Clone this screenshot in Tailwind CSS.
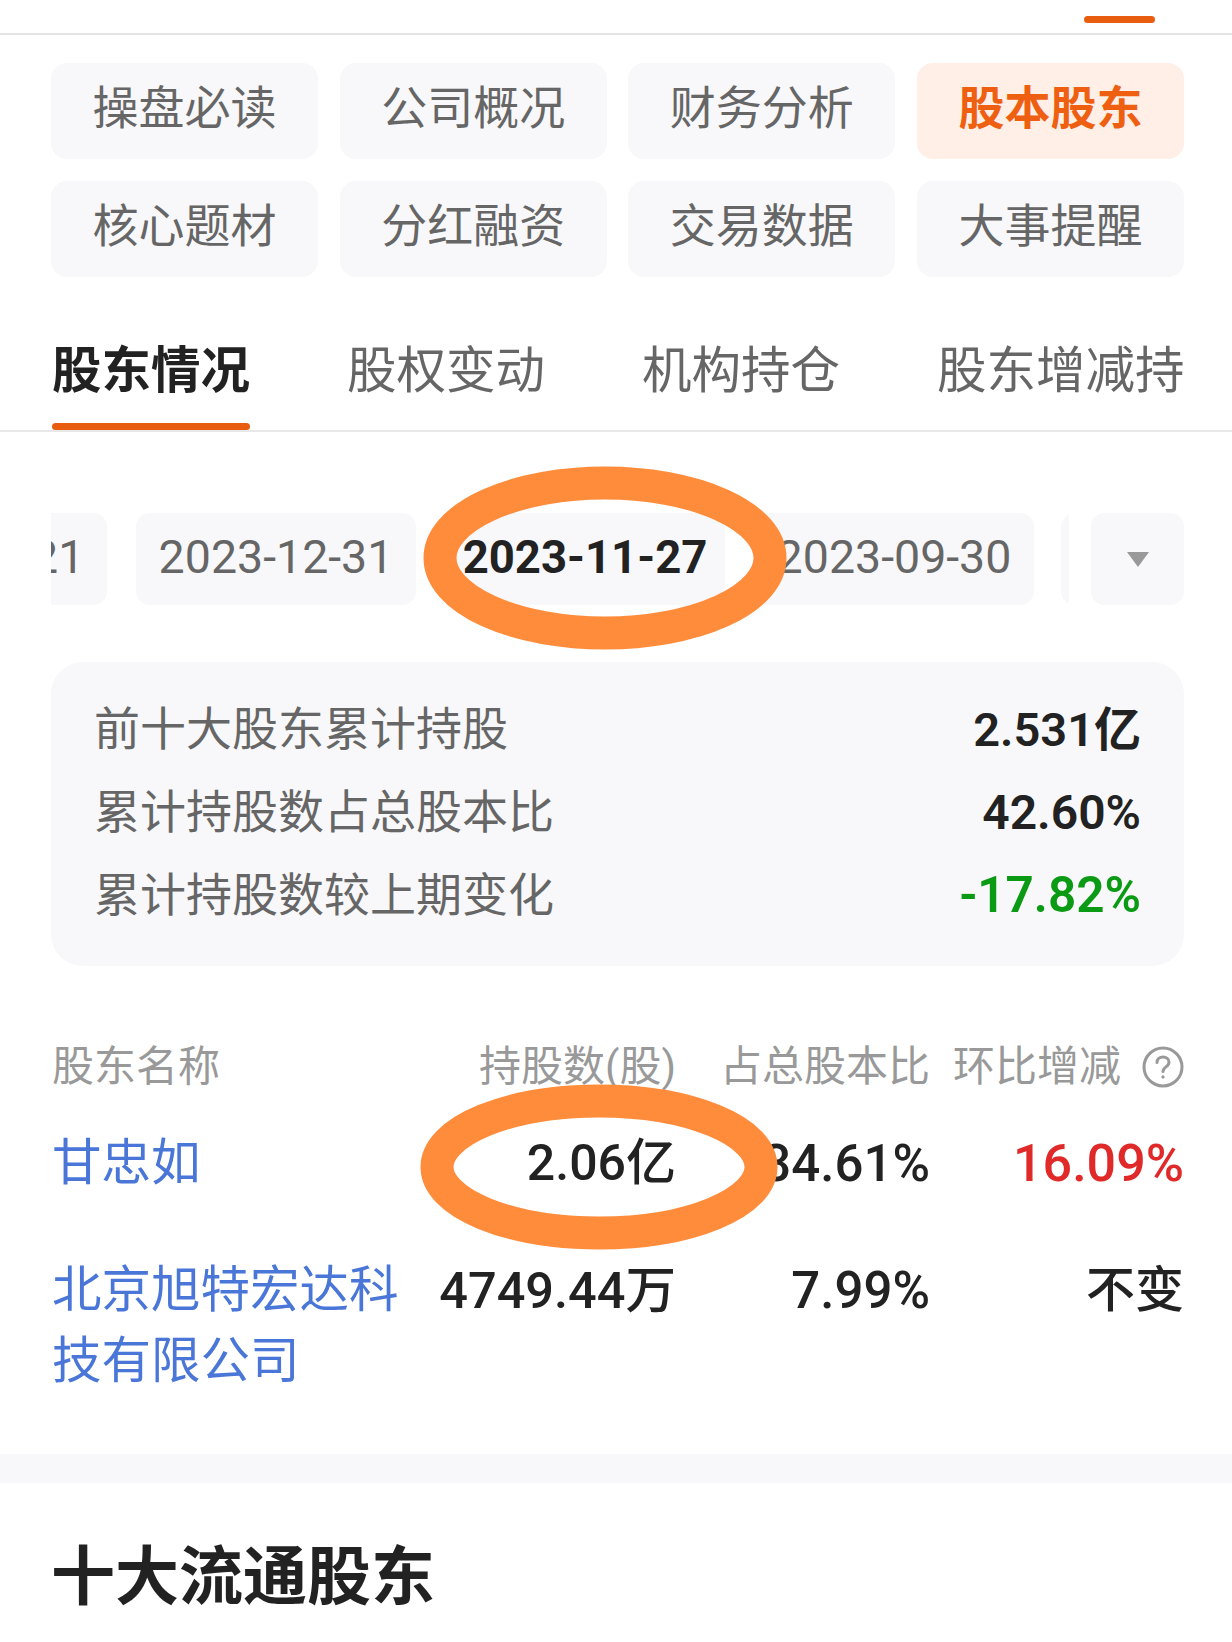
<!DOCTYPE html>
<html lang="zh-CN">
<head>
  <meta charset="UTF-8">
  <meta name="viewport" content="width=device-width, initial-scale=1.0">
  <title>股本股东</title>
  <script src="https://cdn.jsdelivr.net/npm/@tailwindcss/browser@4"></script>
</head>
<body class="bg-white">
  <div class="relative w-[1232px] h-[1642px] overflow-hidden bg-white text-[#222222] font-['Roboto','Noto_Sans_CJK_SC',sans-serif]">

    <!-- top tab bar, only the indicator is in view -->
    <div class="h-[35px] border-b-2 border-[#e4e4e4] flex justify-end pr-[77px] pt-[16px]">
      <div class="w-[71px] h-[7px] rounded-full bg-[#e85d10]"></div>
    </div>

    <!-- section buttons -->
    <div class="grid grid-cols-4 gap-x-[21.5px] gap-y-[22px] pl-[51px] pr-[48px] pt-[28px] text-[46px] leading-none text-[#666666]">
      <div class="h-[96px] pb-[7px] rounded-[16px] bg-[#f8f8fa] flex items-center justify-center">操盘必读</div>
      <div class="h-[96px] pb-[7px] rounded-[16px] bg-[#f8f8fa] flex items-center justify-center">公司概况</div>
      <div class="h-[96px] pb-[7px] rounded-[16px] bg-[#f8f8fa] flex items-center justify-center">财务分析</div>
      <div class="h-[96px] pb-[7px] rounded-[16px] bg-[#ffefe6] flex items-center justify-center font-bold text-[#ee5f12]">股本股东</div>
      <div class="h-[96px] pb-[7px] rounded-[16px] bg-[#f8f8fa] flex items-center justify-center">核心题材</div>
      <div class="h-[96px] pb-[7px] rounded-[16px] bg-[#f8f8fa] flex items-center justify-center">分红融资</div>
      <div class="h-[96px] pb-[7px] rounded-[16px] bg-[#f8f8fa] flex items-center justify-center">交易数据</div>
      <div class="h-[96px] pb-[7px] rounded-[16px] bg-[#f8f8fa] flex items-center justify-center">大事提醒</div>
    </div>

    <!-- sub tabs -->
    <div class="mt-[41px] h-[114px] border-b-2 border-[#e8e8e8] pl-[52px] flex gap-[97px] text-[49.5px] leading-none text-[#666666]">
      <div class="relative h-full pt-[29px] font-bold text-[#222222]">股东情况<div class="absolute left-0 right-0 bottom-0 h-[7px] rounded-full bg-[#e85d10]"></div></div>
      <div class="pt-[29px]">股权变动</div>
      <div class="pt-[29px]">机构持仓</div>
      <div class="pt-[29px]">股东增减持</div>
    </div>

    <!-- report dates -->
    <div class="mt-[81px] pl-[51px] pr-[48px] flex gap-[22px] h-[92px]">
      <div class="flex-1 overflow-hidden">
        <div class="flex gap-[29px] ml-[-224px] text-[46.5px] leading-none text-[#666666] w-[1500px]">
          <div class="w-[280px] h-[92px] pb-[3px] shrink-0 rounded-[14px] bg-[#f8f8fa] flex items-center justify-center">2024-03-21</div>
          <div class="w-[280px] h-[92px] pb-[3px] shrink-0 rounded-[14px] bg-[#f8f8fa] flex items-center justify-center">2023-12-31</div>
          <div class="w-[280px] h-[92px] pb-[3px] shrink-0 rounded-[14px] bg-[#f8f8fa] flex items-center justify-center text-[45.5px] font-bold text-[#222222]">2023-11-27</div>
          <div class="w-[280px] h-[92px] pb-[3px] shrink-0 rounded-[14px] bg-[#f8f8fa] flex items-center justify-center">2023-09-30</div>
          <div class="w-[280px] h-[92px] shrink-0 rounded-[14px] bg-[#f8f8fa] ml-[-2px]"></div>
        </div>
      </div>
      <div class="w-[93px] h-[92px] shrink-0 rounded-[14px] bg-[#f8f8fa] flex items-center justify-center">
        <svg width="22" height="15" viewBox="0 0 22 15"><path d="M0 0h22L11 15z" fill="#999999"/></svg>
      </div>
    </div>

    <!-- summary -->
    <div class="mt-[57px] ml-[51px] mr-[48px] h-[304px] rounded-[32px] bg-[#f8f8fa] px-[43px] pt-[26px] text-[46px] leading-[83px] text-[#666666]">
      <div class="flex justify-between"><span>前十大股东累计持股</span><span class="text-[47px] font-semibold text-[#222222]">2.531亿</span></div>
      <div class="flex justify-between"><span>累计持股数占总股本比</span><span class="text-[48px] font-semibold text-[#222222]">42.60%</span></div>
      <div class="flex justify-between"><span>累计持股数较上期变化</span><span class="text-[49.5px] font-semibold text-[#0a9a14]">-17.82%</span></div>
    </div>

    <!-- holders table -->
    <div class="mt-[71px] pl-[52px] pr-[48px] flex items-center h-[60px] text-[42px] leading-none text-[#999999]">
      <div class="w-[347px]">股东名称</div>
      <div class="w-[277px] text-right">持股数(股)</div>
      <div class="w-[254px] text-right">占总股本比</div>
      <div class="w-[191px] text-right">环比增减</div>
      <svg class="ml-[21px]" width="42" height="42" viewBox="0 0 42 42" fill="none" stroke="#999999" stroke-width="3"><circle cx="21" cy="21" r="19"/><path d="M15 16.5c0-3.5 2.7-5.5 6-5.5s6 2 6 5.2c0 4.8-6 4.6-6 9.3" stroke-linecap="round"/><circle cx="21" cy="31" r="1.2" fill="#999999" stroke-width="1"/></svg>
    </div>
    <div class="mt-[31px] pl-[52px] pr-[48px] flex text-[51px] leading-[71px] font-medium">
      <div class="w-[353px] text-[49.5px] font-normal text-[#4a76d8]">甘忠如</div>
      <div class="w-[271px] text-right text-[50px]">2.06亿</div>
      <div class="w-[254px] text-right">34.61%</div>
      <div class="flex-1 text-right text-[52px] text-[#e02a2a]">16.09%</div>
    </div>
    <div class="mt-[56px] pl-[52px] pr-[48px] flex text-[51px] leading-[71px] font-medium">
      <div class="w-[353px] text-[49.5px] font-normal text-[#4a76d8]">北京旭特宏达科技有限公司</div>
      <div class="w-[271px] text-right text-[50.5px]">4749.44万</div>
      <div class="w-[254px] text-right">7.99%</div>
      <div class="flex-1 text-right text-[49px]">不变</div>
    </div>

    <div class="mt-[57px] h-[29px] bg-[#f8f8fa]"></div>
    <h2 class="mt-[55px] pl-[51px] text-[64px] leading-[80px] font-bold">十大流通股东</h2>

    <!-- hand drawn circles over the screenshot -->
    <svg class="absolute left-0 top-0 pointer-events-none" width="1232" height="1642" fill="none" stroke="#ff8c3b" stroke-width="33">
      <ellipse cx="605" cy="558" rx="165" ry="75"/>
      <ellipse cx="599" cy="1167" rx="162" ry="66"/>
    </svg>
  </div>
</body>
</html>
